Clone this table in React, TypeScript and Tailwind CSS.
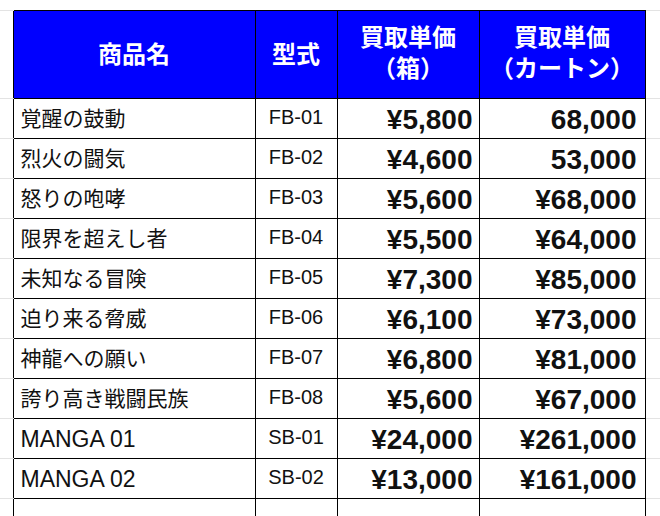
const rows = [
  { name: '覚醒の鼓動', code: 'FB-01', box: '¥5,800', carton: '68,000' },
  { name: '烈火の闘気', code: 'FB-02', box: '¥4,600', carton: '53,000' },
  { name: '怒りの咆哮', code: 'FB-03', box: '¥5,600', carton: '¥68,000' },
  { name: '限界を超えし者', code: 'FB-04', box: '¥5,500', carton: '¥64,000' },
  { name: '未知なる冒険', code: 'FB-05', box: '¥7,300', carton: '¥85,000' },
  { name: '迫り来る脅威', code: 'FB-06', box: '¥6,100', carton: '¥73,000' },
  { name: '神龍への願い', code: 'FB-07', box: '¥6,800', carton: '¥81,000' },
  { name: '誇り高き戦闘民族', code: 'FB-08', box: '¥5,600', carton: '¥67,000' },
  { name: 'MANGA 01', code: 'SB-01', box: '¥24,000', carton: '¥261,000', latin: true },
  { name: 'MANGA 02', code: 'SB-02', box: '¥13,000', carton: '¥161,000', latin: true },
];

const font = { fontFamily: '"Liberation Sans", "Noto Sans CJK JP", sans-serif' };

export default function App() {
  return (
    <div className="w-[660px] h-[516px] overflow-hidden bg-white pt-[10px]" style={font}>
      <table className="table-fixed border-collapse w-[660px]">
        <colgroup>
          <col className="w-[13px]" />
          <col className="w-[242px]" />
          <col className="w-[82px]" />
          <col className="w-[142px]" />
          <col className="w-[166px]" />
          <col className="w-[15px]" />
        </colgroup>
        <thead>
          <tr className="h-[88px]">
            <td className="border-y border-[#e3e3e3]" />
            <th className="border border-black bg-[#0000ff] text-white text-[24px] font-bold leading-[31px]">商品名</th>
            <th className="border border-black bg-[#0000ff] text-white text-[24px] font-bold leading-[31px]">型式</th>
            <th className="border border-black bg-[#0000ff] text-white text-[24px] font-bold leading-[31px] pb-[3px]">
              買取単価
              <br />
              （箱）
            </th>
            <th className="border border-black bg-[#0000ff] text-white text-[24px] font-bold leading-[31px] pb-[3px]">
              買取単価
              <br />
              （カートン）
            </th>
            <td className="border-y border-[#e3e3e3]" />
          </tr>
        </thead>
        <tbody>
          {rows.map((r) => (
            <tr key={r.code} className="h-[40px]">
              <td className="border-b border-[#e3e3e3]" />
              <td className={(r.latin ? 'text-[23px] pt-[2px] ' : 'text-[21px] ') + 'border border-black pl-[7px] text-[#111] leading-none whitespace-nowrap'}>
                {r.name}
              </td>
              <td className="border border-black text-center align-top pt-[8px] text-[20px] text-[#111] leading-none">{r.code}</td>
              <td className="border border-black pr-[6px] text-right text-[28px] font-bold text-[#111] leading-none pt-[3px] whitespace-nowrap">{r.box}</td>
              <td className="border border-black pr-[8px] text-right text-[28px] font-bold text-[#111] leading-none pt-[3px] whitespace-nowrap">{r.carton}</td>
              <td className="border-b border-[#e3e3e3]" />
            </tr>
          ))}
          <tr className="h-[40px]">
            <td className="border-b border-[#e3e3e3]" />
            <td className="border border-black" />
            <td className="border border-black" />
            <td className="border border-black" />
            <td className="border border-black" />
            <td className="border-b border-[#e3e3e3]" />
          </tr>
        </tbody>
      </table>
    </div>
  );
}
